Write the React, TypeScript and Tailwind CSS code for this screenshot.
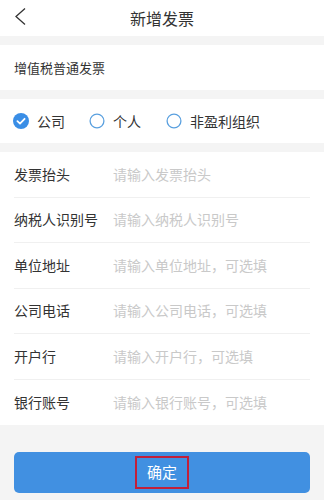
import React, { useState } from 'react';

const fields = [
  { label: '发票抬头', placeholder: '请输入发票抬头' },
  { label: '纳税人识别号', placeholder: '请输入纳税人识别号' },
  { label: '单位地址', placeholder: '请输入单位地址，可选填' },
  { label: '公司电话', placeholder: '请输入公司电话，可选填' },
  { label: '开户行', placeholder: '请输入开户行，可选填' },
  { label: '银行账号', placeholder: '请输入银行账号，可选填' },
];

const kinds = ['公司', '个人', '非盈利组织'];

function Radio({ checked }: { checked: boolean }) {
  if (checked) {
    return (
      <svg width="16" height="16" viewBox="0 0 16 16">
        <circle cx="8" cy="8" r="8" fill="#3a8ee6" />
        <path d="M4.4 8.2 L7 10.6 L11.6 5.8" fill="none" stroke="#fff" strokeWidth="1.8" strokeLinecap="round" strokeLinejoin="round" />
      </svg>
    );
  }
  return (
    <svg width="16" height="16" viewBox="0 0 16 16">
      <circle cx="8" cy="8" r="6.9" fill="none" stroke="#5aa0df" strokeWidth="1.3" />
    </svg>
  );
}

export default function App() {
  const [kind, setKind] = useState(0);

  return (
    <div className="w-[324px] h-[500px] bg-[#f4f4f4] flex flex-col text-[#333]" style={{ fontFamily: '"Noto Sans CJK SC", "Noto Sans", sans-serif' }}>
      {/* header */}
      <header className="h-[36px] bg-white relative flex items-center justify-center">
        <button className="absolute left-[13px] top-[6px] w-[16px] h-[20px] flex items-center">
          <svg width="14" height="19" viewBox="0 0 14 19">
            <path d="M12 1.5 L3 9.5 L12 17.5" fill="none" stroke="#333" strokeWidth="1.3" />
          </svg>
        </button>
        <h1 className="text-[16px] leading-none">新增发票</h1>
      </header>

      <div className="mt-[9px] h-[45px] bg-white flex items-center px-[14px] text-[13px]">增值税普通发票</div>

      <div className="mt-[9px] h-[44px] bg-white flex items-center pl-[13px] text-[14px]">
        {kinds.map((k, i) => (
          <label key={k} onClick={() => setKind(i)} className={'flex items-center gap-[8px] ' + (i === 0 ? 'mr-[24px]' : 'mr-[25px]')}>
            <Radio checked={kind === i} />
            <span>{k}</span>
          </label>
        ))}
      </div>

      <div className="mt-[9px] bg-white px-[14px]">
        {fields.map((f, i) => (
          <div key={f.label} className={'h-[45.5px] flex items-center ' + (i < fields.length - 1 ? 'border-b border-[#f0f0f0]' : '')}>
            <span className="w-[99px] shrink-0 text-[14px] text-[#333]">{f.label}</span>
            <input
              placeholder={f.placeholder}
              className="flex-1 min-w-0 text-[14px] outline-none placeholder:text-[#c9c9c9] bg-transparent"
            />
          </div>
        ))}
      </div>

      <div className="px-[14px] pt-[27px]">
        <button className="w-full h-[41px] rounded-[5px] bg-[#4190e1] flex items-center justify-center">
          <span className="w-[54px] h-[33px] border-2 border-[#c21f3a] flex items-center justify-center text-white text-[15px]">确定</span>
        </button>
      </div>
    </div>
  );
}
